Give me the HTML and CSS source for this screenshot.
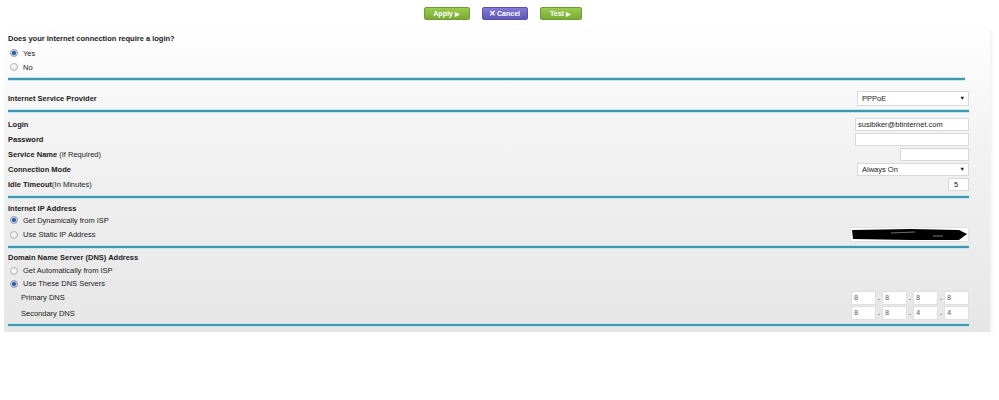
FILE: index.html
```html
<!DOCTYPE html>
<html lang="en">
<head>
  <meta charset="UTF-8">
  <title>Basic Settings</title>
  <link rel="stylesheet" href="styles.css">
</head>
<body>
  <div class="button-bar">
    <button type="button" class="btn btn-green">Apply <span class="arrow">&#9654;</span></button>
    <button type="button" class="btn btn-purple"><span class="x">&#10005;</span>Cancel</button>
    <button type="button" class="btn btn-green btn-test">Test <span class="arrow">&#9654;</span></button>
  </div>

  <div class="panel">
    <!-- login question -->
    <div class="row row-head"><b>Does your Internet connection require a login?</b></div>
    <div class="row row-radio"><span class="radio checked"></span>Yes</div>
    <div class="row row-radio"><span class="radio"></span>No</div>
    <div class="line line-short"></div>

    <!-- provider -->
    <div class="row row-isp">
      <b>Internet Service Provider</b>
      <div class="select select-isp">PPPoE<span class="caret">&#9660;</span></div>
    </div>
    <div class="line"></div>

    <!-- account -->
    <div class="account">
      <div class="row row-field"><b>Login</b><div class="input input-wide">susibiker@btinternet.com</div></div>
      <div class="row row-field"><b>Password</b><div class="input input-wide"></div></div>
      <div class="row row-field"><span><b>Service Name</b> (If Required)</span><div class="input input-mid"></div></div>
      <div class="row row-field"><b>Connection Mode</b><div class="select select-mode">Always On<span class="caret">&#9660;</span></div></div>
      <div class="row row-field"><span><b>Idle Timeout</b>(In Minutes)</span><div class="input input-tiny">5</div></div>
    </div>
    <div class="line"></div>

    <!-- ip address -->
    <div class="ip">
      <div class="row row-sm"><b>Internet IP Address</b></div>
      <div class="row row-sm"><span class="radio checked"></span>Get Dynamically from ISP</div>
      <div class="row row-static">
        <span class="radio-label"><span class="radio"></span>Use Static IP Address</span>
        <div class="input input-static">
          <!-- blacked-out address -->
          <svg class="scribble" viewBox="0 0 117 13" preserveAspectRatio="none">
            <path d="M1 2 L60 1 L108 2 L116 6 L108 12 L60 12 L2 11 Z" fill="#000"/>
            <path d="M40 5 L64 4" stroke="#8a8a8a" stroke-width="0.8"/>
            <path d="M82 8 L92 8" stroke="#999" stroke-width="0.8"/>
          </svg>
        </div>
      </div>
    </div>
    <div class="line"></div>

    <!-- dns -->
    <div class="dns">
      <div class="row row-dns"><b>Domain Name Server (DNS) Address</b></div>
      <div class="row row-dns"><span class="radio"></span>Get Automatically from ISP</div>
      <div class="row row-dns"><span class="radio checked"></span>Use These DNS Servers</div>
      <div class="row row-ip">
        <span class="sub-label">Primary DNS</span>
        <div class="octets">
          <div class="octet">8</div><span class="dot">.</span>
          <div class="octet">8</div><span class="dot">.</span>
          <div class="octet">8</div><span class="dot">.</span>
          <div class="octet">8</div>
        </div>
      </div>
      <div class="row row-ip row-ip2">
        <span class="sub-label">Secondary DNS</span>
        <div class="octets">
          <div class="octet">8</div><span class="dot">.</span>
          <div class="octet">8</div><span class="dot">.</span>
          <div class="octet">4</div><span class="dot">.</span>
          <div class="octet">4</div>
        </div>
      </div>
    </div>
    <div class="line"></div>
  </div>
</body>
</html>
```

FILE: styles.css
```css
body {
  margin: 0;
  background: #fff;
  font-family: "Liberation Sans", Arial, sans-serif;
  font-size: 7.5px;
  color: #1a1a1a;
}

/* top buttons */
.button-bar {
  height: 30px;
  display: flex;
  justify-content: center;
  align-items: flex-start;
  gap: 12px;
  padding-top: 7px;
  box-sizing: border-box;
  padding-left: 6px;
}
.btn {
  width: 46px;
  height: 13px;
  border: 1px solid #6f9a34;
  border-radius: 2px;
  color: #fff;
  font-family: "Liberation Sans", Arial, sans-serif;
  font-size: 7px;
  font-weight: bold;
  padding: 0;
  line-height: 11px;
  text-align: center;
}
.btn-green {
  background: linear-gradient(#9bcb4f, #79ab34);
}
.btn-purple {
  background: linear-gradient(#827ad6, #5f56b9);
  border-color: #5a52a8;
}
.btn-test {
  width: 42px;
}
.arrow {
  font-size: 6px;
}
.x {
  font-size: 8px;
  margin-right: 1px;
}

/* settings panel */
.panel {
  margin: 0 9px 0 4px;
  padding: 0 21px 6px 4px;
  background: linear-gradient(#ffffff, #f3f3f3 35%, #e6e6e6);
  box-shadow: 2px 0 3px rgba(0, 0, 0, 0.06);
}
.row {
  display: flex;
  align-items: center;
  justify-content: space-between;
}
.row-head {
  height: 16px;
}
.row-radio {
  height: 14px;
  justify-content: flex-start;
}
.row-isp {
  height: 16px;
  margin-top: 10px;
}
.account {
  margin-top: 5px;
}
.row-field {
  height: 15px;
}
.ip {
  margin-top: 4px;
}
.row-sm {
  height: 12px;
  justify-content: flex-start;
}
.row-static {
  height: 17px;
}
.radio-label {
  display: flex;
  align-items: center;
}
.dns {
  margin-top: 3px;
}
.row-dns {
  height: 13px;
  justify-content: flex-start;
}
.row-ip {
  height: 15px;
}
.row-ip2 {
  height: 16px;
}
.sub-label {
  padding-left: 13px;
}

.line {
  height: 2px;
  background: #3f97b0;
  box-shadow: 0 -1px 0 #c4e7ee, 0 1px 0 #c4e7ee;
  margin-top: 4px;
}
.line-short {
  margin-right: 4px;
}
.row-isp + .line,
.account + .line {
  margin-top: 4px;
}
.ip + .line,
.dns + .line {
  margin-top: 3px;
}

/* radio buttons */
.radio {
  width: 6px;
  height: 6px;
  border: 1px solid #b5b5b5;
  border-radius: 50%;
  background: radial-gradient(circle at 40% 35%, #ffffff, #dcdcdc);
  margin: 0 5px 0 2px;
}
.radio.checked {
  border-color: #8a9cb5;
  background: radial-gradient(circle, #2d4f8a 0, #3c64a8 1.6px, #c8d6ea 2.6px, #eef2f8 100%);
}

/* form fields */
.input,
.select {
  height: 13px;
  box-sizing: border-box;
  background: #fff;
  border: 1px solid #d8d8d8;
  font-size: 7.5px;
  line-height: 11px;
  padding-left: 2px;
  color: #222;
}
.input-wide {
  width: 114px;
}
.input-mid {
  width: 69px;
}
.input-tiny {
  width: 21px;
  padding-left: 5px;
}
.select {
  position: relative;
  padding-left: 4px;
}
.select-isp {
  width: 112px;
  height: 15px;
  line-height: 13px;
}
.select-mode {
  width: 112px;
}
.caret {
  position: absolute;
  right: 3px;
  top: 0;
  font-size: 5.5px;
  color: #111;
}
.input-static {
  width: 119px;
  height: 15px;
  padding: 0;
  overflow: hidden;
  border-color: #e2e2e2;
}
.scribble {
  display: block;
  width: 117px;
  height: 13px;
}

/* dns address boxes */
.octets {
  display: flex;
  align-items: center;
}
.octet {
  width: 25px;
  height: 14px;
  box-sizing: border-box;
  background: #fff;
  border: 1px solid #e0e0e0;
  font-family: "Liberation Mono", monospace;
  font-size: 7px;
  line-height: 12px;
  color: #555;
  padding-left: 2px;
}
.dot {
  width: 6px;
  text-align: center;
  font-family: "Liberation Mono", monospace;
  color: #555;
}
```
